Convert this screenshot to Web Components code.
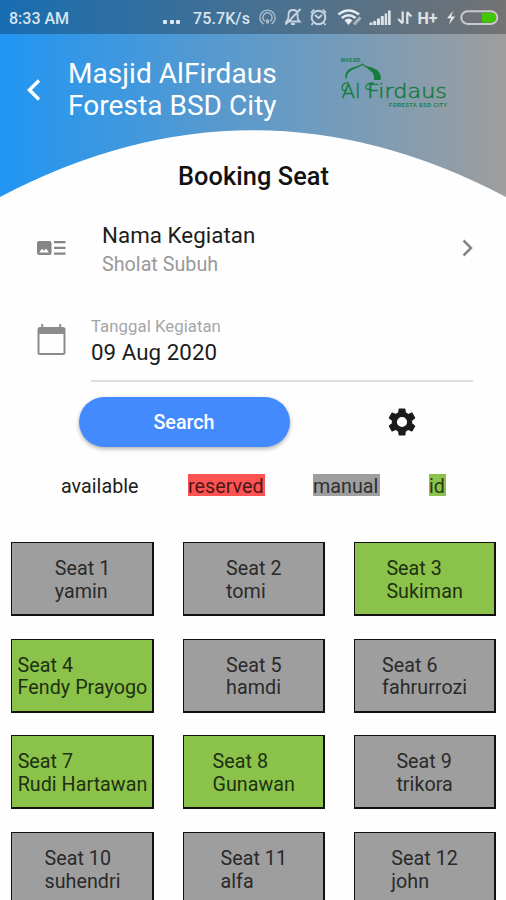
<!DOCTYPE html>
<html lang="id">
<head>
<meta charset="utf-8">
<meta name="viewport" content="width=device-width">
<title>Booking Seat</title>
<style>
html,body{margin:0;padding:0;background:#fefefe;height:900px;overflow:hidden}
body{font-family:Roboto,"Liberation Sans",sans-serif;color:#1c1c1c}
</style>
</head>
<body>
<booking-page></booking-page>
<script>
const define=(name,html)=>customElements.define(name,class extends HTMLElement{
  constructor(){super();const t=document.createElement('template');t.innerHTML=html;
    this.attachShadow({mode:'open'}).append(t.content.cloneNode(true));}
});

define('status-bar',`
<style>
:host{display:flex;align-items:center;height:34px;box-sizing:border-box;padding:3px 7px 0 9px;background:rgba(0,0,0,.27);color:#d9e4ef;font:500 16px/20px Roboto,sans-serif}
.time{flex:1}
.dots{display:flex;gap:2.500px;margin:7px 13px 0 0}
.dots i{width:4px;height:4px;border-radius:1px;background:#dfe8f0}
.speed{width:58px;letter-spacing:.1px;white-space:nowrap}
svg{display:block;width:248px;height:32px;flex:none;margin-top:-1px}
</style>
<span class="time">8:33 AM</span><span class="dots"><i></i><i></i><i></i></span><span class="speed">75.7K/s</span>
<svg viewBox="251 2 248 32" fill="none" stroke="#c7d3df" stroke-width="1.5">
<g opacity=".75"><path d="M263.5 24.2A7.6 7.6 0 1 1 271.5 24.2M265 21.3A4.6 4.6 0 1 1 270 21.3"/><path d="M266 23.5q-.5-4.5 1.5-4.5t1.500 4.5z" fill="#c7d3df" stroke="none"/></g>
<path d="M286.5 21.500h13q-2-2-2-5v-2q0-4.500-4.500-4.500t-4.500 4.500v2q0 3-2 5zM291 24h4M285.500 24.500 300.500 9" stroke-width="1.800"/>
<circle cx="318.500" cy="17.500" r="6.800" stroke-width="2"/><path d="M315 15l3.500 3 3.500-3M311 13l3-3.500M326 13l-3-3.500M313 23l-1.500 2M324 23l1.500 2" stroke-width="1.800"/>
<path d="M338.500 14.500Q348.500 6.500 359 14.500M341.800 18Q348.700 12.500 355.500 18" stroke="#e6edf3" stroke-width="2.600"/><path d="M344.500 20.300q4-3.500 8 0l-4 4.700z" fill="#e6edf3" stroke="none"/><path d="M354 24.500l6.500-7" stroke-width="3" stroke="#a9b5c0"/>
<path d="M369.500 25v-2.500h3V25zM373.200 25v-4h3v4zM377 25v-6.500h3V25zM380.800 25v-9h3v9zM384.700 25V13.500h2.400V25zM388 25V10.500h2.700V25z" fill="#dce3e9" stroke="none"/>
<path d="M402.700 11.500V23M402.700 23.500l-4.500-4.500M407.300 24V12.500M407 12l4.500 4.500" stroke="#dfe4e8" stroke-width="2.200"/>
<text x="417.500" y="23.500" font-family="Roboto,sans-serif" font-size="16" font-weight="700" fill="#dfe3e6" stroke="none" textLength="20">H+</text>
<path d="M453 11l-6 7.300h4l-2 6.200 6.200-8h-4z" fill="#e6e8ea" stroke="none"/>
<rect x="461.300" y="11.300" width="36" height="12.600" rx="6.300" stroke="#c9cbcd" stroke-width="2"/><path d="M482 12.800h9.500a4.800 4.800 0 0 1 0 9.600H482z" fill="#43c800" stroke="none"/>
</svg>`);

define('mosque-logo',`
<style>:host{display:block;width:110px;height:54px}svg{display:block}</style>
<svg width="110" height="54" viewBox="340 57 110 54" fill="#167c3c">
<text x="341" y="62.500" font-family="Liberation Sans,sans-serif" font-weight="700" font-size="5" textLength="19">MASJID</text>
<path d="M345.500 79.500Q343.500 72.500 352.500 68.500Q360.500 66.500 362.500 64.300Q365 67.500 372 68.500Q382 72 380.800 81H374Q375 74.500 370 71.500Q366.500 68.500 362.500 66Q359.500 68.500 353.500 70.300Q346 73.500 347 79.500Z"/>
<g font-family="DejaVu Sans,sans-serif" font-weight="200" stroke="#167c3c" stroke-width=".5"><text x="341.500" y="98.500" font-size="20">A</text><text x="355" y="98.500" font-size="20">l</text><text x="367" y="98.500" font-size="19.500" textLength="80" lengthAdjust="spacingAndGlyphs">Firdaus</text></g>
<path d="M349 84q-7-.5-7 5q.5 4 5 2M374 84q-9 0-8 5q2 3 5 0" fill="none" stroke="#167c3c" stroke-width="1.300"/>
<text x="389" y="107.500" font-family="Liberation Sans,sans-serif" font-weight="700" font-size="5.200" textLength="58">FORESTA BSD CITY</text>
</svg>`);

define('app-header',`
<style>
:host{display:grid;height:197px;background:linear-gradient(90deg,#2196f3,#9e9e9e)}
.curve,.content{grid-area:1/1}
.curve{width:506px;height:197px;display:block}
.bar{display:flex;align-items:center;height:112px;padding-left:26px}
.back{width:16px;height:24px;margin-right:26px}
h1{margin:0;width:272px;font:400 28px/32.500px Roboto,sans-serif;color:#fff;letter-spacing:.05px;white-space:nowrap}
h2{margin:14px 0 0;text-align:center;font:500 25.300px/34px Roboto,sans-serif;letter-spacing:.1px;color:#111;padding-left:1px}
mosque-logo{margin-top:-14px}
</style>
<svg class="curve" viewBox="0 0 506 197"><path fill="#fefefe" d="M0 197Q253 63.500 506 197z"/></svg>
<div class="content"><status-bar></status-bar>
<div class="bar"><svg class="back" viewBox="0 0 16 24" fill="none" stroke="#fff" stroke-width="3.500"><path d="M13 2.500 3.500 12l9.500 9.500"/></svg>
<h1><slot name="place"></slot></h1><mosque-logo></mosque-logo></div>
<h2><slot></slot></h2></div>`);

define('activity-field',`
<style>
:host{display:flex;align-items:center;height:76px;padding:0 32px 0 37px;box-sizing:border-box}
.text{flex:1;margin-left:36px;padding-top:2px}
.a{font-size:22.300px;line-height:30px;letter-spacing:.06px;color:#1c1c1c}
.b{font-size:19.700px;line-height:29px;letter-spacing:.02px;color:#999}
svg{display:block;flex:none}
</style>
<svg width="29" height="16" viewBox="0 0 29 16" fill="#858585"><path fill-rule="evenodd" d="M2 1h10.500q2 0 2 2v10q0 2-2 2H2q-2 0-2-2V3q0-2 2-2zM2.200 12.500h9.800L9 8.500l-2 2.300L5 8.800z"/><path d="M17 1h11.500v2.300H17zM17 6.700h11.500V9H17zM17 12.500h11.500v2.300H17z"/></svg>
<div class="text"><div class="a"><slot></slot></div><div class="b"><slot name="value"></slot></div></div>
<svg width="14" height="18" viewBox="0 0 14 18" fill="none" stroke="#858585" stroke-width="2.500"><path d="M3.500 1.500 11 9l-7.500 7.500"/></svg>`);

define('date-field',`
<style>
:host{display:flex;padding:0 33px 0 37px}
svg{display:block;margin-top:12px;flex:none}
.text{flex:1;margin-left:25px;height:70px;border-bottom:2px solid #dedede;box-sizing:border-box}
.a{font-size:16.800px;line-height:22px;letter-spacing:.03px;color:#a6a6a6;padding-top:3px}
.b{font-size:22.300px;line-height:30px;letter-spacing:.06px;color:#1c1c1c}
</style>
<svg width="29" height="32" viewBox="0 0 29 32"><path fill="#8b8b8b" fill-rule="evenodd" d="M4.200 0h2v3h16V0h2v3H26q2.500 0 2.500 2.500v23Q28.500 31 26 31H3Q.5 31 .5 28.500v-23Q.5 3 3 3h1.200zM2.500 10v19h24V10z"/></svg>
<div class="text"><div class="a"><slot></slot></div><div class="b"><slot name="value"></slot></div></div>`);

define('search-row',`
<style>
:host{display:flex;align-items:center;padding-left:79px}
button{width:211px;height:50px;border:0;border-radius:25px;background:#448aff;color:#fff;font:500 19.700px/24px Roboto,sans-serif;letter-spacing:0;box-shadow:0 2px 4px rgba(0,0,0,.3);padding:2px 1px 0 0}
svg{width:34px;height:34px;margin-left:95px}
</style>
<button><slot></slot></button>
<svg viewBox="0 0 24 24" fill="#1b1b1b"><path d="M19.140 12.940c.04-.3.06-.61.06-.94 0-.32-.02-.64-.07-.94l2.030-1.580c.18-.14.23-.41.12-.61l-1.920-3.320c-.12-.22-.37-.29-.59-.22l-2.390.96c-.5-.38-1.030-.7-1.620-.94l-.36-2.540c-.04-.24-.24-.41-.48-.41h-3.840c-.24 0-.43.17-.47.41l-.36 2.540c-.59.24-1.130.57-1.620.94l-2.390-.96c-.22-.08-.47 0-.59.22L2.740 8.870c-.12.21-.08.47.12.61l2.030 1.580c-.05.3-.09.63-.09.94s.02.64.07.94l-2.030 1.580c-.18.14-.23.41-.12.61l1.920 3.320c.12.22.37.29.59.22l2.390-.96c.5.38 1.030.7 1.620.94l.36 2.540c.05.24.24.41.48.41h3.840c.24 0 .44-.17.47-.41l.36-2.540c.59-.24 1.130-.56 1.620-.94l2.390.96c.22.08.47 0 .59-.22l1.920-3.320c.12-.22.07-.47-.12-.61l-2.010-1.580zM12 15.600A3.600 3.600 0 1 1 12 8.400a3.600 3.600 0 0 1 0 7.200z"/></svg>`);

define('seat-legend',`
<style>
:host{display:flex;height:22px;padding-left:61px;font-size:19.700px;line-height:25px;letter-spacing:.04px;color:#1c1c1c}
span{display:block;white-space:nowrap;box-sizing:border-box;height:22px}
.r{background:#ff5252;color:#4c1818;width:77px;margin-left:49px}
.m{background:#9e9e9e;color:#303030;width:67px;margin-left:48px}
.i{background:#8bc34a;color:#2a3a16;width:17px;margin-left:49px}
.v{width:78px}
</style>
<span class="v">available</span><span class="r">reserved</span><span class="m">manual</span><span class="i">id</span>`);

define('seat-card',`
<style>
:host{display:flex;justify-content:center;align-items:center;box-sizing:border-box;height:74px;border:1.500px solid #111;border-width:1px 2px 2px 1px;background:#9e9e9e;color:#2a2a2a;font-size:19.700px;line-height:22.600px;letter-spacing:.04px;white-space:nowrap}
:host([booked]){background:#8bc34a;color:#203011}
div{padding:4px 0 0 1px}
p{margin:0}
</style>
<div><p><slot name="seat"></slot></p><p><slot></slot></p></div>`);

define('seat-grid',`
<style>:host{display:grid;grid-template-columns:143px 142px 142px;column-gap:28.800px;row-gap:22.700px;padding:0 0 0 11px}</style><slot></slot>`);

define('booking-page',`
<style>
:host{display:flex;flex-direction:column;width:506px;height:900px;overflow:hidden;background:#fefefe}
app-header,activity-field,date-field,search-row,seat-legend,seat-grid{flex:none}
activity-field{margin-top:13px}
date-field{margin-top:26px}
search-row{margin-top:15px}
seat-legend{margin-top:27px}
seat-grid{margin-top:46px}
</style>
<app-header><span slot="place">Masjid AlFirdaus<br>Foresta BSD City</span>Booking Seat</app-header>
<activity-field>Nama Kegiatan<span slot="value">Sholat Subuh</span></activity-field>
<date-field>Tanggal Kegiatan<span slot="value">09 Aug 2020</span></date-field>
<search-row>Search</search-row>
<seat-legend></seat-legend>
<seat-grid>
<seat-card><span slot="seat">Seat 1</span>yamin</seat-card>
<seat-card><span slot="seat">Seat 2</span>tomi</seat-card>
<seat-card booked><span slot="seat">Seat 3</span>Sukiman</seat-card>
<seat-card booked><span slot="seat">Seat 4</span>Fendy Prayogo</seat-card>
<seat-card><span slot="seat">Seat 5</span>hamdi</seat-card>
<seat-card><span slot="seat">Seat 6</span>fahrurrozi</seat-card>
<seat-card booked><span slot="seat">Seat 7</span>Rudi Hartawan</seat-card>
<seat-card booked><span slot="seat">Seat 8</span>Gunawan</seat-card>
<seat-card><span slot="seat">Seat 9</span>trikora</seat-card>
<seat-card><span slot="seat">Seat 10</span>suhendri</seat-card>
<seat-card><span slot="seat">Seat 11</span>alfa</seat-card>
<seat-card><span slot="seat">Seat 12</span>john</seat-card>
</seat-grid>`);
</script>
</body>
</html>
